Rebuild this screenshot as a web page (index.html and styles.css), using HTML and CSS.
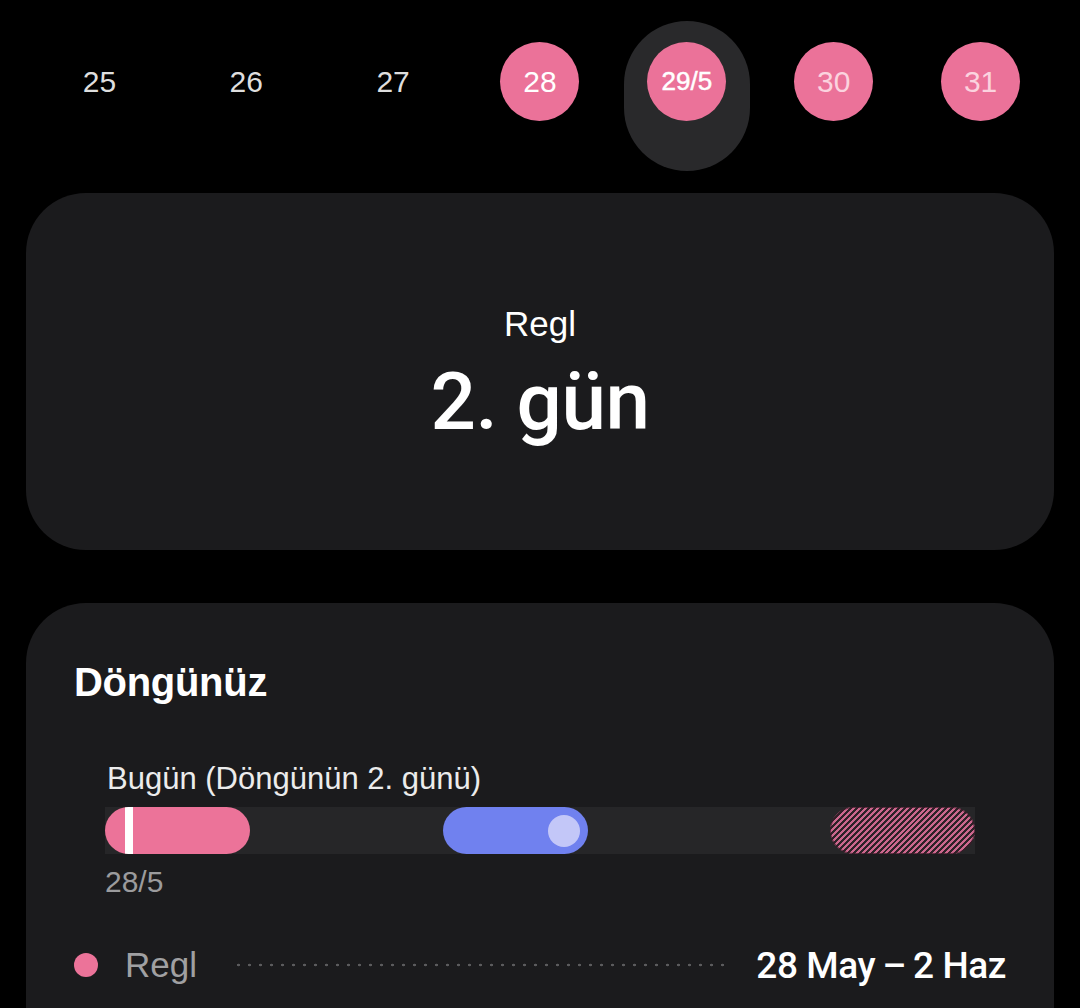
FILE: index.html
```html
<!DOCTYPE html>
<html lang="tr">
<head>
<meta charset="utf-8">
<title>Döngü</title>
<link rel="stylesheet" href="styles.css">
</head>
<body>
<div class="screen">
  <div class="dates">
    <div class="day"><span class="num">25</span></div>
    <div class="day"><span class="num">26</span></div>
    <div class="day"><span class="num">27</span></div>
    <div class="day"><span class="num period">28</span></div>
    <div class="day selected"><span class="num period today">29/5</span></div>
    <div class="day"><span class="num period future">30</span></div>
    <div class="day"><span class="num period future">31</span></div>
  </div>

  <section class="card status">
    <div class="status-label">Regl</div>
    <div class="status-value">2. gün</div>
  </section>

  <section class="card cycle">
    <h2 class="cycle-title">Döngünüz</h2>
    <div class="cycle-chart">
      <div class="today-label">Bugün (Döngünün 2. günü)</div>
      <div class="track">
        <div class="seg seg-period" style="left:0%;width:16.667%"><span class="marker"></span></div>
        <div class="seg seg-fertile" style="left:38.85%;width:16.667%"><span class="knob"></span></div>
        <div class="seg seg-next" style="left:83.333%;width:16.667%"></div>
      </div>
      <div class="start-date">28/5</div>
    </div>
    <div class="legend-row">
      <span class="legend-dot"></span>
      <span class="legend-name">Regl</span>
      <span class="leader"></span>
      <span class="legend-range">28 May&#8201;–&#8201;2 Haz</span>
    </div>
  </section>
</div>
</body>
</html>
```

FILE: styles.css
```css
* { box-sizing: border-box; }

html, body {
  margin: 0;
  padding: 0;
  background: #000;
}

body {
  font-family: "Liberation Sans", Arial, sans-serif;
  color: #fff;
  overflow: hidden;
}

.screen {
  padding: 0 26px;
}

/* ---------- date strip ---------- */
.dates {
  display: grid;
  grid-template-columns: repeat(7, 1fr);
  padding-top: 42px;
}

.day {
  position: relative;
  display: flex;
  justify-content: center;
}

.day.selected::before {
  content: "";
  position: absolute;
  top: -21px;
  left: 50%;
  width: 126px;
  height: 150px;
  margin-left: -63px;
  border-radius: 63px;
  background: #29292b;
}

.num {
  position: relative;
  width: 79px;
  height: 79px;
  border-radius: 50%;
  display: flex;
  align-items: center;
  justify-content: center;
  font-size: 30px;
  color: #dedede;
}

.num.period {
  background: #eb7299;
  color: #fff;
}

.num.today {
  font-size: 26px;
  -webkit-text-stroke: 0.5px #fff;
}

.num.future {
  color: #fbd3df;
}

/* ---------- cards ---------- */
.card {
  background: #1b1b1d;
  border-radius: 60px;
}

.status {
  margin-top: 72px;
  height: 357px;
  padding-top: 110px;
  display: flex;
  flex-direction: column;
  align-items: center;
}

.status-label {
  font-size: 35px;
  line-height: 42px;
}

.status-value {
  margin-top: 12px;
  font-family: Roboto, "Liberation Sans", sans-serif;
  font-weight: 500;
  font-size: 80px;
  line-height: 90px;
  letter-spacing: -0.5px;
}

.cycle {
  margin-top: 53px;
  padding: 55px 48px 80px;
}

.cycle-title {
  margin: 0;
  font-size: 40px;
  line-height: 48px;
  font-weight: 700;
  letter-spacing: -0.3px;
}

.cycle-chart {
  margin: 55px 31px 0;
}

.today-label {
  font-size: 31px;
  line-height: 36px;
  color: #ececec;
  padding-left: 2px;
}

.track {
  position: relative;
  margin-top: 10px;
  height: 47px;
  background: #262628;
}

.seg {
  position: absolute;
  top: 0;
  bottom: 0;
  border-radius: 24px;
  overflow: hidden;
}

.seg-period {
  background: #ec7399;
}

.marker {
  position: absolute;
  top: 0;
  bottom: 0;
  left: 20px;
  width: 8px;
  background: #fff;
}

.seg-fertile {
  background: #7081ef;
}

.knob {
  position: absolute;
  top: 50%;
  right: 8px;
  width: 32px;
  height: 32px;
  margin-top: -16px;
  border-radius: 50%;
  background: #c3c7f8;
}

.seg-next {
  background: repeating-linear-gradient(135deg, #cc678d 0 2.1px, #2f2228 2.1px 4.2px);
  box-shadow: inset 0 0 0 1px rgba(60, 25, 40, 0.7);
}

.start-date {
  margin-top: 10px;
  font-size: 30px;
  line-height: 36px;
  color: #9b9b9d;
}

/* ---------- legend ---------- */
.legend-row {
  margin-top: 41px;
  height: 48px;
  display: flex;
  align-items: center;
}

.legend-dot {
  width: 24px;
  height: 24px;
  border-radius: 50%;
  background: #ec7399;
  flex: none;
}

.legend-name {
  margin-left: 27px;
  font-size: 35px;
  color: #a0a0a2;
}

.leader {
  flex: 1;
  height: 4px;
  margin: 0 27px 0 36px;
  background-image: radial-gradient(circle, #5c5c5e 1.1px, transparent 1.6px);
  background-size: 11px 4px;
  background-repeat: repeat-x;
}

.legend-range {
  font-family: Roboto, "Liberation Sans", sans-serif;
  font-weight: 500;
  font-size: 37px;
  letter-spacing: -0.4px;
}
```
